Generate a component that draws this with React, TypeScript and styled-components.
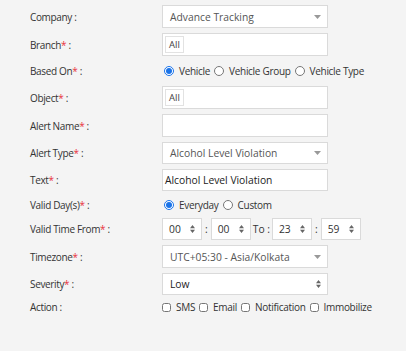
import React from "react";
import styled, { createGlobalStyle } from "styled-components";

const GlobalStyle = createGlobalStyle`
  html, body {
    margin: 0;
    padding: 0;
    background: #f4f4f4;
  }
  body {
    font-family: "Open Sans", "Liberation Sans", sans-serif;
    font-size: 10px;
    color: #333;
  }
`;

const Form = styled.div`
  display: flex;
  flex-direction: column;
  gap: 5px;
  padding: 5px 0 0 30px;
  width: 376px;
  height: 346px;
  background: #f4f4f4;
`;

const Row = styled.div<{ h: number }>`
  display: flex;
  align-items: center;
  height: ${(p) => p.h}px;
`;

const Label = styled.div`
  width: 132px;
  flex-shrink: 0;
  color: #333;
  letter-spacing: -0.35px;
  white-space: nowrap;
`;

const Star = styled.span`
  color: #e8323c;
`;

const Field = styled.div`
  display: flex;
  align-items: center;
  height: 100%;
`;

const Box = styled.div<{ dark?: boolean; pad?: number }>`
  box-sizing: border-box;
  width: 166px;
  height: 100%;
  background: #fff;
  border: 1px solid #dadada;
  display: flex;
  align-items: center;
  justify-content: space-between;
  padding: 0 6px 0 ${(p) => (p.pad ?? 7)}px;
  font-size: 10.3px;
  color: ${(p) => (p.dark ? "#222" : "#555")};
`;

const Tag = styled.span`
  border: 1px solid #e2e2e2;
  padding: 0 3px;
  height: 15px;
  line-height: 15px;
  font-size: 9.5px;
  color: #444;
  margin-left: -4px;
`;

const Radio = styled.input.attrs({ type: "radio" })`
  width: 10px;
  height: 10px;
  margin: 0 5px 0 0;
  accent-color: #1a73e8;
`;

const Check = styled.input.attrs({ type: "checkbox" })`
  width: 9px;
  height: 9px;
  margin: 0 5px 0 0;
`;

const Opt = styled.label`
  display: flex;
  align-items: center;
  margin-right: 4px;
  color: #333;
  letter-spacing: -0.3px;
  white-space: nowrap;
`;

const Options = styled.div<{ inset?: number }>`
  display: flex;
  align-items: center;
  height: 100%;
  padding-left: ${(p) => p.inset ?? 2}px;
`;

const Spin = styled.div`
  box-sizing: border-box;
  width: 40px;
  height: 100%;
  background: #fff;
  border: 1px solid #dadada;
  display: flex;
  align-items: center;
  justify-content: space-between;
  padding: 0 6px;
  font-size: 10.3px;
  color: #333;
`;

const Sep = styled.span<{ wide?: boolean }>`
  margin: 0 ${(p) => (p.wide ? 2 : 3)}px;
  font-size: 10.3px;
  color: #333;
`;

const Arrow = () => (
  <svg width="7" height="4" viewBox="0 0 7 4">
    <path d="M0 0 L7 0 L3.5 4 Z" fill="#999" />
  </svg>
);

const UpDown = () => (
  <svg width="5" height="8" viewBox="0 0 5 8">
    <path d="M0 3.3 L2.5 0 L5 3.3 Z M0 4.7 L5 4.7 L2.5 8 Z" fill="#666" />
  </svg>
);

function LabelText({ text, req }: { text: string; req?: boolean }) {
  return (
    <Label>
      {text}
      {req && <Star>*</Star>} :
    </Label>
  );
}

export default function App() {
  return (
    <>
      <GlobalStyle />
      <Form>
        <Row h={23}>
          <LabelText text="Company" />
          <Field>
            <Box>
              Advance Tracking
              <Arrow />
            </Box>
          </Field>
        </Row>
        <Row h={23}>
          <LabelText text="Branch" req />
          <Field>
            <Box pad={6}>
              <Tag>All</Tag>
            </Box>
          </Field>
        </Row>
        <Row h={20}>
          <LabelText text="Based On" req />
          <Options>
            <Opt>
              <Radio name="based" defaultChecked />
              Vehicle
            </Opt>
            <Opt>
              <Radio name="based" />
              Vehicle Group
            </Opt>
            <Opt>
              <Radio name="based" />
              Vehicle Type
            </Opt>
          </Options>
        </Row>
        <Row h={23}>
          <LabelText text="Object" req />
          <Field>
            <Box pad={6}>
              <Tag>All</Tag>
            </Box>
          </Field>
        </Row>
        <Row h={23}>
          <LabelText text="Alert Name" req />
          <Field>
            <Box />
          </Field>
        </Row>
        <Row h={22}>
          <LabelText text="Alert Type" req />
          <Field>
            <Box>
              Alcohol Level Violation
              <Arrow />
            </Box>
          </Field>
        </Row>
        <Row h={22}>
          <LabelText text="Text" req />
          <Field>
            <Box dark pad={2}>
              Alcohol Level Violation
            </Box>
          </Field>
        </Row>
        <Row h={17}>
          <LabelText text="Valid Day(s)" req />
          <Options>
            <Opt>
              <Radio name="days" defaultChecked />
              Everyday
            </Opt>
            <Opt>
              <Radio name="days" />
              Custom
            </Opt>
          </Options>
        </Row>
        <Row h={22}>
          <LabelText text="Valid Time From" req />
          <Field>
            <Spin>
              00 <UpDown />
            </Spin>
            <Sep>:</Sep>
            <Spin>
              00 <UpDown />
            </Spin>
            <Sep wide>To :</Sep>
            <Spin>
              23 <UpDown />
            </Spin>
            <Sep>:</Sep>
            <Spin>
              59 <UpDown />
            </Spin>
          </Field>
        </Row>
        <Row h={23}>
          <LabelText text="Timezone" req />
          <Field>
            <Box>
              UTC+05:30 - Asia/Kolkata
              <Arrow />
            </Box>
          </Field>
        </Row>
        <Row h={22}>
          <LabelText text="Severity" req />
          <Field>
            <Box dark>
              Low
              <UpDown />
            </Box>
          </Field>
        </Row>
        <Row h={14}>
          <Label>Action :</Label>
          <Options inset={0}>
            <Opt>
              <Check />
              SMS
            </Opt>
            <Opt>
              <Check />
              Email
            </Opt>
            <Opt>
              <Check />
              Notification
            </Opt>
            <Opt>
              <Check />
              Immobilize
            </Opt>
          </Options>
        </Row>
      </Form>
    </>
  );
}
